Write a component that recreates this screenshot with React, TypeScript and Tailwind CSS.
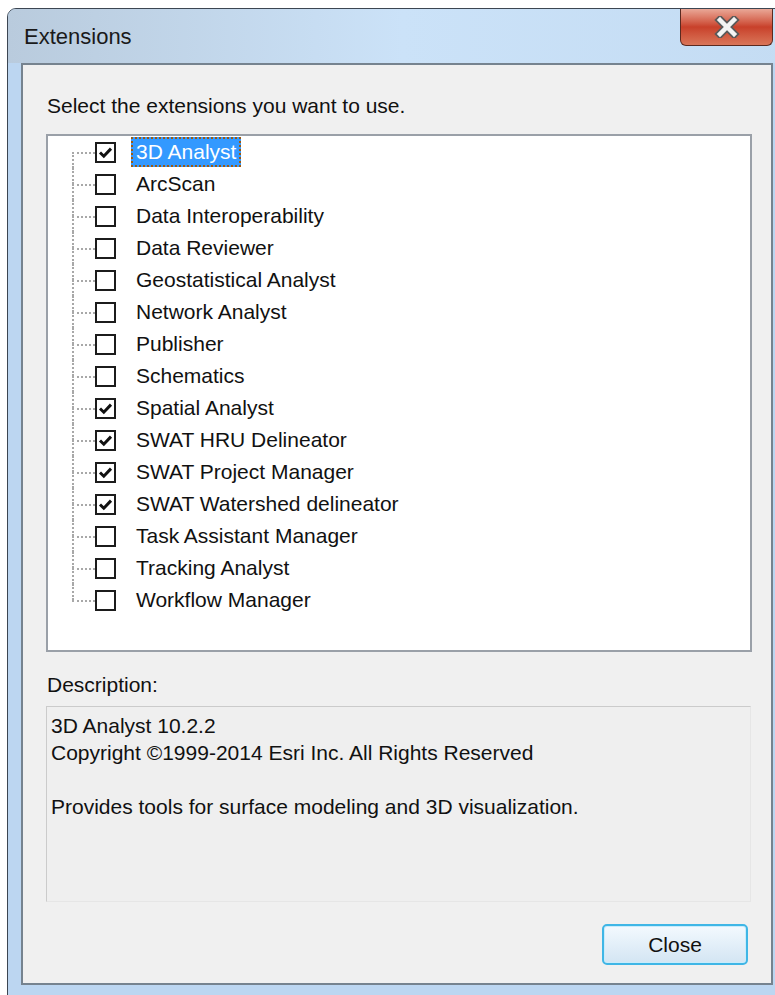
import { Fragment } from "react";

type Ext = { name: string; checked: boolean };

const extensions: Ext[] = [
  { name: "3D Analyst", checked: true },
  { name: "ArcScan", checked: false },
  { name: "Data Interoperability", checked: false },
  { name: "Data Reviewer", checked: false },
  { name: "Geostatistical Analyst", checked: false },
  { name: "Network Analyst", checked: false },
  { name: "Publisher", checked: false },
  { name: "Schematics", checked: false },
  { name: "Spatial Analyst", checked: true },
  { name: "SWAT HRU Delineator", checked: true },
  { name: "SWAT Project Manager", checked: true },
  { name: "SWAT Watershed delineator", checked: true },
  { name: "Task Assistant Manager", checked: false },
  { name: "Tracking Analyst", checked: false },
  { name: "Workflow Manager", checked: false },
];

function CheckBox({ checked }: { checked: boolean }) {
  return (
    <div className="flex h-[21px] w-[21px] shrink-0 items-center justify-center border-2 border-[#1c1c1c] bg-white">
      {checked && (
        <svg width="15" height="15" viewBox="0 0 15 15">
          <path d="M2 7.5 L5.8 11.2 L13 3.6" fill="none" stroke="#111" strokeWidth="3" />
        </svg>
      )}
    </div>
  );
}

function TreeRow({ ext, first, last, selected }: { ext: Ext; first: boolean; last: boolean; selected: boolean }) {
  return (
    <div className="flex h-[32px] items-center">
      {/* dotted connector: vertical trunk plus the branch to the checkbox */}
      <div className="ml-[24px] flex h-full w-[23px] flex-col">
        <div className={`h-1/2 ${first ? "" : "border-l-2 border-dotted border-[#a8a8a8]"}`} />
        <div className={`h-1/2 border-t-2 border-dotted border-[#a8a8a8] ${last ? "" : "border-l-2"}`} />
      </div>
      <CheckBox checked={ext.checked} />
      <div
        className={`ml-[15px] flex h-[30px] items-center px-[3px] text-[21px] ${
          selected ? "border-2 border-dotted border-[#9a5a14] bg-[#3399ff] text-white" : "border-2 border-transparent text-[#111]"
        }`}
      >
        {ext.name}
      </div>
    </div>
  );
}

export default function App() {
  return (
    <div className="h-[995px] w-[775px] overflow-hidden bg-white pl-[7px] pt-[8px] font-['Liberation_Sans',Arial,sans-serif] text-[#111]">
      <div className="flex h-[1000px] w-[790px] flex-col rounded-t-[9px] border border-[#3c4652] bg-[#bcd6f1]">
        {/* title bar */}
        <div className="flex h-[54px] items-start rounded-t-[8px] bg-gradient-to-r from-[#b9cbdd] via-[#cbe2f8] to-[#c4dcf3]">
          <div className="pl-[16px] pt-[15px] text-[22px] leading-[26px] text-[#1a1a1a]">Extensions</div>
          <div className="ml-auto mr-[23px] flex h-[37px] w-[93px] items-center justify-center rounded-b-[6px] border border-t-0 border-[#5b2a20] bg-gradient-to-b from-[#e9a797] via-[#c8402a] to-[#d97559]">
            <svg width="28" height="22" viewBox="0 0 28 22">
              <path d="M7 4 L21 18 M21 4 L7 18" stroke="#5a5a5a" strokeWidth="8" strokeLinecap="square" />
              <path d="M7 4 L21 18 M21 4 L7 18" stroke="#f4f4f4" strokeWidth="4.5" strokeLinecap="square" />
            </svg>
          </div>
        </div>

        {/* client area */}
        <div className="ml-[13px] flex h-[922px] w-[752px] flex-col border-2 border-[#76838f] bg-[#f0f0f0] pl-[23px]">
          <div className="ml-[1px] mt-[29px] text-[21px] leading-[24px]">Select the extensions you want to use.</div>

          <div className="mt-[16px] h-[518px] w-[706px] border-2 border-[#9aa0a8] bg-white">
            {extensions.map((ext, i) => (
              <Fragment key={ext.name}>
                <TreeRow ext={ext} first={i === 0} last={i === extensions.length - 1} selected={i === 0} />
              </Fragment>
            ))}
          </div>

          <div className="ml-[1px] mt-[21px] text-[21px] leading-[24px]">Description:</div>

          <div className="mt-[9px] h-[196px] w-[705px] border border-[#cbcbcb] border-b-[#e6e6e6] border-r-[#e6e6e6] bg-[#efefef] pl-[4px] pt-[5px] text-[21px] leading-[27px]">
            <div>3D Analyst 10.2.2</div>
            <div>Copyright ©1999-2014 Esri Inc. All Rights Reserved</div>
            <div>&nbsp;</div>
            <div>Provides tools for surface modeling and 3D visualization.</div>
          </div>

          <div className="ml-[556px] mt-[22px] flex h-[41px] w-[146px] items-center justify-center rounded-[5px] border-2 border-[#3fb6e6] bg-gradient-to-b from-[#f3f9fe] to-[#d3e5f3] text-[21px] shadow-[inset_0_0_0_1px_#c9ecfb]">
            Close
          </div>
        </div>
      </div>
    </div>
  );
}
